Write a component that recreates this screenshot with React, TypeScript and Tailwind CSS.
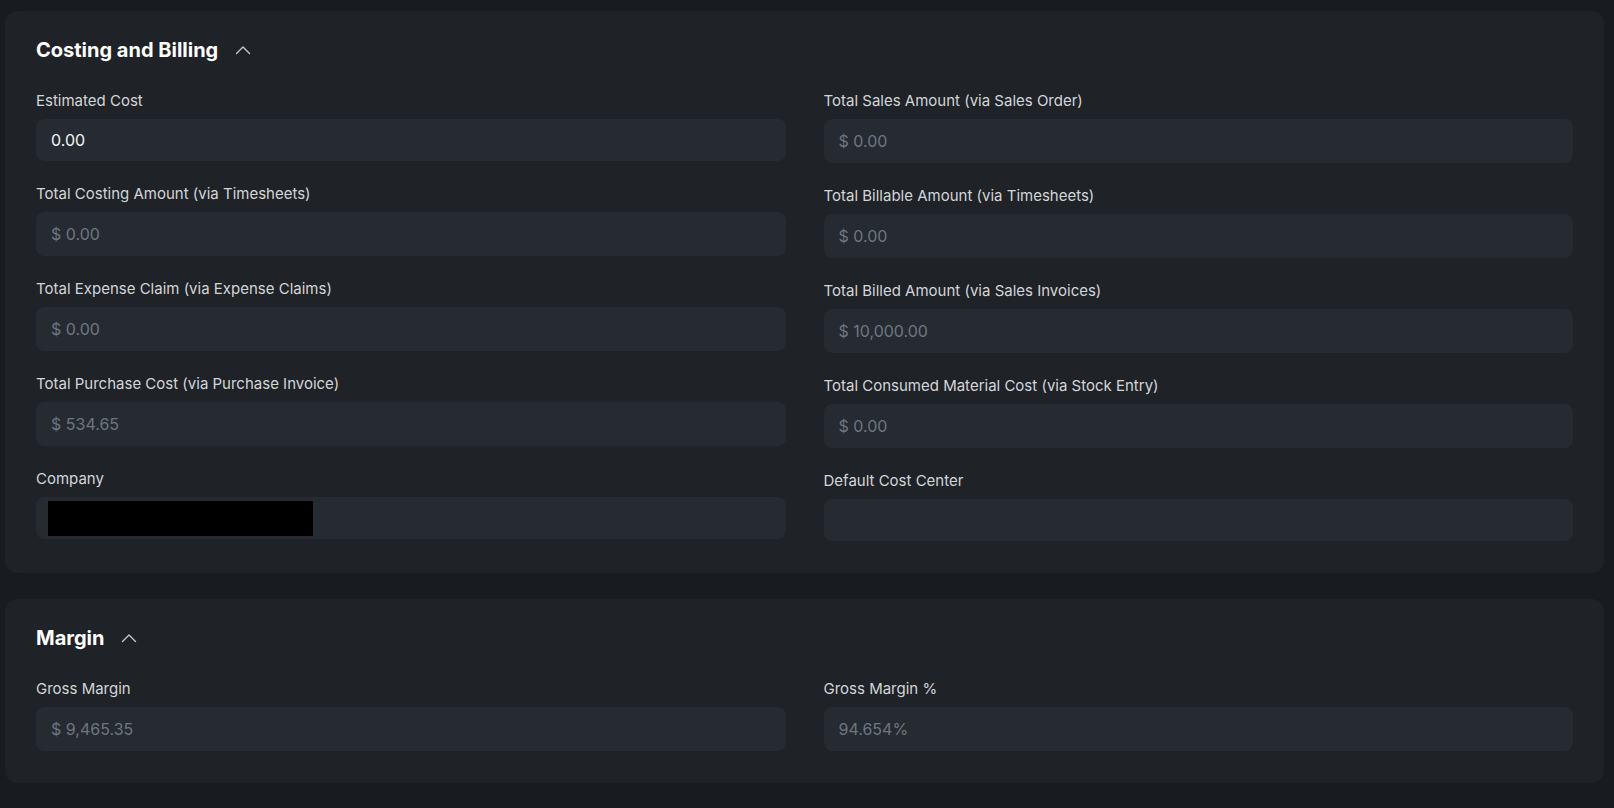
import { ReactNode } from "react";

interface Field {
  label: string;
  value?: string;
  editable?: boolean;
  redacted?: boolean;
}

const leftFields: Field[] = [
  { label: "Estimated Cost", value: "0.00", editable: true },
  { label: "Total Costing Amount (via Timesheets)", value: "$ 0.00" },
  { label: "Total Expense Claim (via Expense Claims)", value: "$ 0.00" },
  { label: "Total Purchase Cost (via Purchase Invoice)", value: "$ 534.65" },
  { label: "Company", editable: true, redacted: true },
];

const rightFields: Field[] = [
  { label: "Total Sales Amount (via Sales Order)", value: "$ 0.00" },
  { label: "Total Billable Amount (via Timesheets)", value: "$ 0.00" },
  { label: "Total Billed Amount (via Sales Invoices)", value: "$ 10,000.00" },
  { label: "Total Consumed Material Cost (via Stock Entry)", value: "$ 0.00" },
  { label: "Default Cost Center", editable: true },
];

function ChevronUp() {
  return (
    <svg width="16" height="10" viewBox="0 0 16 10" fill="none" className="text-[#c4c8cd]">
      <path d="M1.5 8.5L8 2l6.5 6.5" stroke="currentColor" strokeWidth="1.4" strokeLinecap="round" strokeLinejoin="round" />
    </svg>
  );
}

function FieldControl({ field }: { field: Field }) {
  return (
    <div className="flex flex-col">
      <label className="text-[15px] leading-5 text-[#d2d6db]">{field.label}</label>
      {field.editable ? (
        <div className="mt-2 flex h-[42px] items-center rounded-lg bg-[#262a31] px-[15px] text-[16px] text-[#f4f5f6]">
          {field.redacted ? (
            <div className="-ml-[3px] h-[35px] w-[265px] bg-black" />
          ) : (
            field.value
          )}
        </div>
      ) : (
        <div className="mt-2 flex h-[44px] items-center rounded-lg bg-[#262a31] px-[15px] text-[16px] text-[#6d7782]">
          {field.value}
        </div>
      )}
    </div>
  );
}

function Section({ title, children }: { title: string; children: ReactNode }) {
  return (
    <section className="rounded-xl bg-[#1f2226] px-[31px] pt-[25px] pb-[32px]">
      <div className="flex h-7 items-center gap-[17px]">
        <h2 className="text-[20px] leading-7 font-bold text-white">{title}</h2>
        <ChevronUp />
      </div>
      <div className="mt-[27px] grid grid-cols-2 items-start gap-x-[38px]">{children}</div>
    </section>
  );
}

export default function App() {
  return (
    <div
      className="min-h-[808px] w-full bg-[#181b1f] pt-[11px] pr-[10px] pl-[5px]"
      style={{ fontFamily: "Inter, 'Noto Sans', sans-serif" }}
    >
      <Section title="Costing and Billing">
        <div className="flex flex-col gap-[23px]">
          {leftFields.map((f) => (
            <FieldControl key={f.label} field={f} />
          ))}
        </div>
        <div className="flex flex-col gap-[23px]">
          {rightFields.map((f) => (
            <FieldControl key={f.label} field={f} />
          ))}
        </div>
      </Section>

      <div className="mt-[26px]">
        <Section title="Margin">
          <FieldControl field={{ label: "Gross Margin", value: "$ 9,465.35" }} />
          <FieldControl field={{ label: "Gross Margin %", value: "94.654%" }} />
        </Section>
      </div>
    </div>
  );
}
